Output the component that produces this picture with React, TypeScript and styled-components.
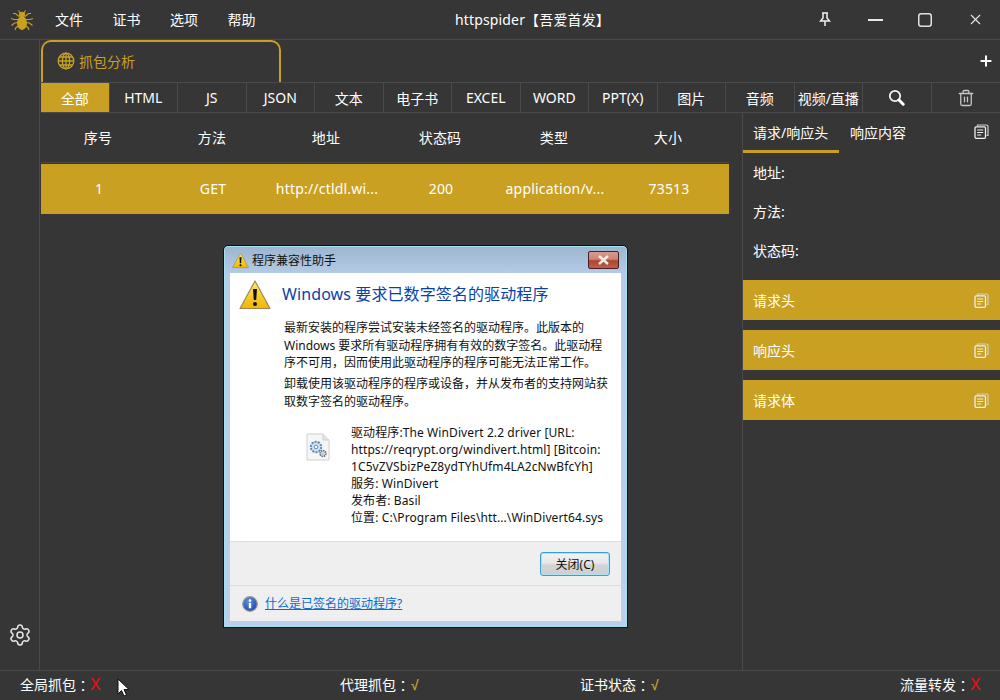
import React from "react";
import styled, { createGlobalStyle } from "styled-components";
import { Plus, Settings, Trash2, X as XIcon } from "lucide-react";

const FONT = `"Noto Sans", "Noto Sans CJK SC", sans-serif`;
const GOLD = "#c9a022";
const LINE = "#4a4a4a";

const Global = createGlobalStyle`
  html, body { margin: 0; padding: 0; background: #363636; }
  * { box-sizing: border-box; }
  body { font-family: ${FONT}; }
`;

const Shell = styled.div`
  position: relative; width: 1000px; height: 700px; overflow: hidden;
  display: flex; flex-direction: column; background: #363636; color: #fff;
  font-size: 14px;
`;
const TitleBar = styled.header`
  height: 40px; flex: none; display: flex; align-items: center; position: relative;
  border-bottom: 1px solid ${LINE};
`;
const Logo = styled.div` width: 44px; padding-left: 10px; display: flex; align-items: center; `;
const Menu = styled.nav` display: flex; gap: 29.5px; padding-left: 11px; `;
const MenuItem = styled.span` font-size: 14px; line-height: 20px; `;
const Title = styled.div`
  position: absolute; left: 0; right: 0; top: 10px; padding-left: 65px; text-align: center;
  font-size: 14px; line-height: 20px; letter-spacing: 0.15px; pointer-events: none;
`;
const WinControls = styled.div` margin-left: auto; display: flex; align-items: center; `;
const WinButton = styled.button`
  width: 50px; height: 39px; border: 0; background: none; padding: 0; color: #e8e8e8;
  display: flex; align-items: center; justify-content: center;
`;
const Body = styled.div` flex: 1; min-height: 0; display: flex; `;
const Sidebar = styled.aside`
  width: 40px; flex: none; border-right: 1px solid ${LINE};
  display: flex; flex-direction: column; justify-content: flex-end; align-items: center;
  padding: 0 0 23px 1px; color: #e6e6e6;
`;
const Content = styled.main` flex: 1; min-width: 0; display: flex; flex-direction: column; padding-left: 1px; `;
const TabRow = styled.div`
  height: 43px; flex: none; display: flex; align-items: flex-end; justify-content: space-between;
  border-bottom: 1px solid ${LINE}; padding: 0 6px 0 1px; margin-left: -1px;
`;
const Tab = styled.div`
  width: 240px; height: 42px; border: 2px solid ${GOLD}; border-bottom: 0;
  border-radius: 10px 10px 0 0; display: flex; align-items: center; gap: 4px;
  padding: 0 0 3px 14px; color: ${GOLD}; font-size: 14px;
`;
const AddButton = styled.div` height: 42px; display: flex; align-items: center; color: #fff; `;
const Filters = styled.div`
  height: 30px; flex: none; display: grid; grid-template-columns: repeat(14, 1fr);
  border-bottom: 1px solid ${LINE};
`;
const Filter = styled.div<{ $active?: boolean }>`
  display: flex; align-items: center; justify-content: center; font-size: 14px; white-space: nowrap;
  background: ${(p) => (p.$active ? GOLD : "transparent")};
  border-right: 1px solid ${LINE};
  &:last-child { border-right: 0; }
`;
const Split = styled.div` flex: 1; min-height: 0; display: flex; `;
const TablePane = styled.section` width: 688px; flex: none; `;
const Gutter = styled.div` width: 14px; flex: none; border-right: 1px solid ${LINE}; `;
const Row = styled.div<{ $selected?: boolean }>`
  display: grid; grid-template-columns: repeat(6, 114px); align-items: center; height: 50px;
  margin-bottom: 1px; padding-bottom: 2px;
  padding-left: ${(p) => (p.$selected ? "1px" : "0")};
  background: ${(p) => (p.$selected ? GOLD : "transparent")};
  border-bottom: ${(p) => (p.$selected ? "0" : `1px solid ${LINE}`)};
`;
const Cell = styled.div` text-align: center; font-size: 14px; white-space: nowrap; letter-spacing: 0.2px; `;
const Detail = styled.aside` flex: 1; min-width: 0; display: flex; flex-direction: column; `;
const DetailTabs = styled.div`
  height: 40px; display: flex; align-items: stretch; padding-right: 11px; margin-bottom: 10px;
`;
const DetailTab = styled.div<{ $active?: boolean }>`
  padding: 0 0 0 ${(p) => (p.$active ? "10px" : "11px")}; display: flex; align-items: center; font-size: 14px; white-space: nowrap;
  width: ${(p) => (p.$active ? "96px" : "auto")};
  border-bottom: 3px solid ${(p) => (p.$active ? GOLD : "transparent")};
`;
const DetailTabIcon = styled.div` margin-left: auto; display: flex; align-items: center; padding-bottom: 3px; `;
const Field = styled.div` padding-left: 10px; height: 39px; font-size: 14px; line-height: 20px; `;
const Section = styled.div`
  height: 40px; margin-bottom: 10px; background: ${GOLD}; display: flex; align-items: center;
  justify-content: space-between; padding: 0 11px 0 10px; font-size: 14px;
`;
const StatusBar = styled.footer`
  height: 30px; flex: none; border-top: 1px solid ${LINE}; display: grid;
  grid-template-columns: 320px 240px 320px 1fr; align-items: center;
  padding: 0 0 1px 20px; font-size: 14px;
`;
const StatusItem = styled.span` white-space: nowrap; line-height: 20px; display: flex; align-items: center; `;
const Colon = styled.span` font-family: "Noto Sans CJK TC", sans-serif; `;
const Mark = styled.span<{ $ok?: boolean }>`
  font-family: "Liberation Sans", sans-serif; margin-left: ${(p) => (p.$ok ? "1px" : "0")};
  color: ${(p) => (p.$ok ? GOLD : "#f01010")}; font-size: ${(p) => (p.$ok ? "14px" : "16px")};
  font-weight: ${(p) => (p.$ok ? 700 : 400)};
`;
const Cursor = styled.svg` position: absolute; left: 117px; top: 678px; `;

/* Windows dialog */
const Dialog = styled.div`
  position: absolute; left: 223px; top: 245px; width: 405px; height: 383px;
  border: 1px solid #111; border-radius: 5px 5px 0 0;
  background: linear-gradient(180deg, #9db6d0 0, #b5cde6 30px, #b9d1ea 100%);
  padding: 0 6px 6px 6px; display: flex; flex-direction: column;
  color: #111;
  box-shadow: inset 0 0 0 1px #a6e0f3;
`;
const DialogTitle = styled.div`
  height: 27px; flex: none; display: flex; align-items: center; gap: 3px; padding: 1px 0 0 2px; font-size: 12px; color: #111;
`;
const CloseBtn = styled.div`
  margin-left: auto; margin-right: 2px; width: 31px; height: 18px; margin-top: -1px; border: 1px solid #4a1f28; border-radius: 2px;
  background: linear-gradient(180deg, #d99a8e 0, #cf8474 45%, #ab4530 55%, #c0604a 100%);
  display: flex; align-items: center; justify-content: center;
`;
const DialogBody = styled.div`
  flex: none; height: 268px; background: #fff; display: flex; padding: 6px 0 0 9px; gap: 11px;
`;
const DialogMain = styled.div` flex: 1; min-width: 0; `;
const Heading = styled.div`
  font-size: 16px; line-height: 30px; color: #0a3fa8; height: 40px; white-space: nowrap; letter-spacing: 0.1px;
`;
const Para = styled.p`
  margin: 0 0 3.5px 2px; font-size: 12px; line-height: 17.5px; color: #111; width: 326px;
`;
const DriverRow = styled.div` display: flex; margin-top: 15px; padding-left: 24px; `;
const DriverIcon = styled.div` width: 45px; flex: none; padding-top: 8px; `;
const DriverText = styled.div`
  font-size: 12px; line-height: 17px; white-space: nowrap; color: #111; margin-top: -1px; letter-spacing: 0.1px;
`;
const DialogActions = styled.div`
  height: 45px; flex: none; background: #efefef; border-top: 1px solid #dcdcdc; border-bottom: 1px solid #dcdcdc;
  display: flex; align-items: center; justify-content: flex-end; padding-right: 11px;
`;
const CloseAction = styled.div`
  width: 70px; height: 24px; border: 1px solid #35a0d4; border-radius: 3px; font-size: 12px; color: #111;
  background: linear-gradient(180deg, #f3f3f3 0, #e8e8e8 45%, #d4d4d4 55%, #cfcfcf 100%);
  box-shadow: inset 0 0 0 1px #a9e3f5;
  display: flex; align-items: center; justify-content: center;
`;
const DialogFooter = styled.div`
  flex: 1; background: #efefef; display: flex; align-items: center; gap: 7px; padding: 0 0 0 12px;
`;
const HelpLink = styled.a`
  font-size: 12px; color: #0a6bd0; text-decoration: underline; line-height: 16px;
`;

const DocIcon: React.FC = () => (
  <svg width="15" height="15" viewBox="0 0 15 15" fill="none">
    <path d="M3.500 2V1h9a1.500 1.500 0 0 1 1.500 1.500V11.500h-1.500" stroke="#cfcfcf" strokeWidth="1.200" />
    <rect x="1" y="2.800" width="10.500" height="11.500" rx="1.200" stroke="#efefef" strokeWidth="1.300" />
    <path d="M3.200 6h6M3.200 8.500h6M3.200 11h4" stroke="#efefef" strokeWidth="1.100" />
  </svg>
);

const GlobeIcon: React.FC = () => (
  <svg width="18" height="18" viewBox="0 0 18 18" fill="none" stroke={GOLD} strokeWidth="1.300">
    <circle cx="9" cy="9" r="7.800" />
    <ellipse cx="9" cy="9" rx="3.600" ry="7.800" />
    <path d="M9 1.200v15.600M1.200 9h15.600M2.300 5h13.400M2.300 13h13.400" />
  </svg>
);

const SearchIcon: React.FC = () => (
  <svg width="17" height="17" viewBox="0 0 17 17" fill="none">
    <circle cx="7" cy="7" r="5.200" stroke="#f2f2f2" strokeWidth="1.800" />
    <path d="M11 11l4.200 4.200" stroke="#fff" strokeWidth="3" strokeLinecap="round" />
  </svg>
);

const Spider: React.FC = () => (
  <svg width="24" height="22" viewBox="0 0 24 22" fill="none" stroke={GOLD} strokeWidth="1.100">
    <ellipse cx="12" cy="14" rx="4.400" ry="6.400" fill={GOLD} />
    <circle cx="12" cy="5.800" r="2.500" fill={GOLD} />
    <path d="M10 4 8.500 1.500M14 4l1.500-2.500" />
    <path d="M9 7.500 5.500 4.500 3 4.500M15 7.500l3.500-3 2.500 0" />
    <path d="M8 10.500H4L1 9.500M16 10.500h4l3-1" />
    <path d="M8 13.500 4.500 14 1.500 16.500M16 13.500l3.500.5 3 2.500" />
    <path d="M8.500 17 6 18.500 5 21M15.500 17l2.500 1.500 1 2.500" />
  </svg>
);

const PinIcon: React.FC = () => (
  <svg width="12" height="15" viewBox="0 0 12 15" fill="none" stroke="#f0f0f0" strokeWidth="1.500">
    <path d="M3 1h6M4 1v5L1.500 9h9L8 6V1M6 9v5" />
  </svg>
);

const WarnIcon: React.FC<{ size: number }> = ({ size }) => (
  <svg width={size} height={size} viewBox="0 0 32 32">
    <defs>
      <linearGradient id="warnFill" x1="0" y1="0" x2="0" y2="1">
        <stop offset="0" stopColor="#ffe96b" />
        <stop offset="1" stopColor="#f2b400" />
      </linearGradient>
    </defs>
    <path d="M16 2 31 29.500H1Z" fill="url(#warnFill)" stroke="#9a8a55" strokeWidth="1.200" strokeLinejoin="round" />
    <path d="M14 10h4l-.8 11h-2.400Z" fill="#111" />
    <circle cx="16" cy="25" r="2" fill="#111" />
  </svg>
);

const DriverFile: React.FC = () => (
  <svg width="24" height="28" viewBox="0 0 24 28" fill="none">
    <path d="M1 1h16l6 6v20H1Z" fill="#f6f6f6" stroke="#d0d0d0" />
    <path d="M17 1v6h6" fill="#e4e4e4" stroke="#cfcfcf" />
    <circle cx="10" cy="14" r="5.200" fill="#cfe2f4" stroke="#5f8fbe" strokeWidth="2" strokeDasharray="2.200 1" />
    <circle cx="10" cy="14" r="1.800" fill="#fff" stroke="#6a8fb0" />
    <circle cx="17" cy="20.500" r="3" fill="#c9cfd6" stroke="#6b7680" strokeWidth="1.500" strokeDasharray="1.500 .8" />
  </svg>
);

const InfoIcon: React.FC = () => (
  <svg width="16" height="16" viewBox="0 0 16 16">
    <defs>
      <radialGradient id="infoFill" cx=".4" cy=".3" r=".9">
        <stop offset="0" stopColor="#5c8fe0" />
        <stop offset="1" stopColor="#123c9c" />
      </radialGradient>
    </defs>
    <circle cx="8" cy="8" r="7.300" fill="url(#infoFill)" stroke="#9a9a9a" strokeWidth="1.200" />
    <rect x="6.800" y="6.800" width="2.400" height="5.500" fill="#fff" />
    <circle cx="8" cy="4.600" r="1.300" fill="#fff" />
  </svg>
);

const filters = ["全部", "HTML", "JS", "JSON", "文本", "电子书", "EXCEL", "WORD", "PPT(X)", "图片", "音频", "视频/直播"];
const headers = ["序号", "方法", "地址", "状态码", "类型", "大小"];
const cells = ["1", "GET", "http://ctldl.wi...", "200", "application/v...", "73513"];

export default function App() {
  return (
    <Shell>
      <Global />
      <TitleBar>
        <Logo><Spider /></Logo>
        <Menu>
          {["文件", "证书", "选项", "帮助"].map((m) => <MenuItem key={m}>{m}</MenuItem>)}
        </Menu>
        <Title>httpspider【吾爱首发】</Title>
        <WinControls>
          <WinButton><PinIcon /></WinButton>
          <WinButton>
            <svg width="15" height="2" viewBox="0 0 15 2"><rect width="15" height="2" fill="#e8e8e8" /></svg>
          </WinButton>
          <WinButton>
            <svg width="14" height="14" viewBox="0 0 14 14" fill="none"><rect x=".75" y=".75" width="12.500" height="12.500" rx="2.500" stroke="#e0e0e0" strokeWidth="1.500" /></svg>
          </WinButton>
          <WinButton><XIcon size={17} strokeWidth={1.5} /></WinButton>
        </WinControls>
      </TitleBar>
      <Body>
        <Sidebar><Settings size={24} strokeWidth={1.5} /></Sidebar>
        <Content>
          <TabRow>
            <Tab><GlobeIcon />抓包分析</Tab>
            <AddButton><Plus size={16} strokeWidth={3} /></AddButton>
          </TabRow>
          <Filters>
            {filters.map((f, i) => <Filter key={f} $active={i === 0}>{f}</Filter>)}
            <Filter><SearchIcon /></Filter>
            <Filter><Trash2 size={18} color="#c8c8c8" strokeWidth={1.7} /></Filter>
          </Filters>
          <Split>
            <TablePane>
              <Row>{headers.map((h) => <Cell key={h}>{h}</Cell>)}</Row>
              <Row $selected>{cells.map((c) => <Cell key={c}>{c}</Cell>)}</Row>
            </TablePane>
            <Gutter />
            <Detail>
              <DetailTabs>
                <DetailTab $active>请求/响应头</DetailTab>
                <DetailTab>响应内容</DetailTab>
                <DetailTabIcon><DocIcon /></DetailTabIcon>
              </DetailTabs>
              <Field>地址:</Field>
              <Field>方法:</Field>
              <Field>状态码:</Field>
              <div>
                {["请求头", "响应头", "请求体"].map((s) => (
                  <Section key={s}>{s}<DocIcon /></Section>
                ))}
              </div>
            </Detail>
          </Split>
        </Content>
      </Body>
      <StatusBar>
        <StatusItem>全局抓包<Colon>：</Colon><Mark>X</Mark></StatusItem>
        <StatusItem>代理抓包<Colon>：</Colon><Mark $ok>√</Mark></StatusItem>
        <StatusItem>证书状态<Colon>：</Colon><Mark $ok>√</Mark></StatusItem>
        <StatusItem>流量转发<Colon>：</Colon><Mark>X</Mark></StatusItem>
      </StatusBar>

      <Dialog>
        <DialogTitle>
          <WarnIcon size={17} />
          程序兼容性助手
          <CloseBtn>
            <svg width="13" height="10" viewBox="0 0 13 10"><path d="M2 1l9 8M11 1 2 9" stroke="#ececec" strokeWidth="2.400" /></svg>
          </CloseBtn>
        </DialogTitle>
        <DialogBody>
          <WarnIcon size={32} />
          <DialogMain>
            <Heading>Windows 要求已数字签名的驱动程序</Heading>
            <Para>最新安装的程序尝试安装未经签名的驱动程序。此版本的 Windows 要求所有驱动程序拥有有效的数字签名。此驱动程序不可用，因而使用此驱动程序的程序可能无法正常工作。</Para>
            <Para>卸载使用该驱动程序的程序或设备，并从发布者的支持网站获取数字签名的驱动程序。</Para>
            <DriverRow>
              <DriverIcon><DriverFile /></DriverIcon>
              <DriverText>
                驱动程序:The WinDivert 2.2 driver [URL:<br />
                https://reqrypt.org/windivert.html] [Bitcoin:<br />
                1C5vZVSbizPeZ8ydTYhUfm4LA2cNwBfcYh]<br />
                服务: WinDivert<br />
                发布者: Basil<br />
                位置: C:\Program Files\htt...\WinDivert64.sys
              </DriverText>
            </DriverRow>
          </DialogMain>
        </DialogBody>
        <DialogActions><CloseAction>关闭(C)</CloseAction></DialogActions>
        <DialogFooter>
          <InfoIcon />
          <HelpLink>什么是已签名的驱动程序?</HelpLink>
        </DialogFooter>
      </Dialog>

      <Cursor width="14" height="19" viewBox="0 0 14 19">
        <path d="M1 1v15l3.500-3.500 2.500 5.500 2.500-1-2.500-5.500H12Z" fill="#fff" stroke="#111" strokeWidth="1" />
      </Cursor>
    </Shell>
  );
}
